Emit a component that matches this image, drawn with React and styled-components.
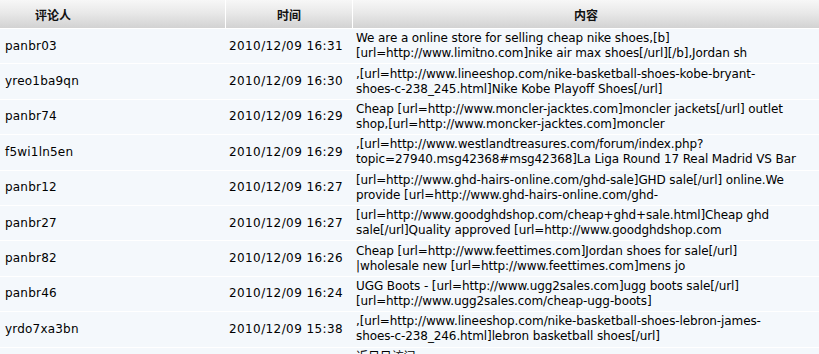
import React from 'react';
import styled, { createGlobalStyle } from 'styled-components';

const GlobalStyle = createGlobalStyle`
  html, body {
    margin: 0;
    padding: 0;
    background: #fff;
    overflow: hidden;
  }
  body {
    font-family: "DejaVu Sans", Tahoma, Verdana, "Noto Sans CJK SC", sans-serif;
    font-size: 12px;
    color: #000;
  }
`;

const comments = [
  {
    user: 'panbr03',
    time: '2010/12/09 16:31',
    lines: [
      'We are a online store for selling cheap nike shoes,[b]',
      '[url=http://www.limitno.com]nike air max shoes[/url][/b],Jordan sh',
    ],
  },
  {
    user: 'yreo1ba9qn',
    time: '2010/12/09 16:30',
    lines: [
      ',[url=http://www.lineeshop.com/nike-basketball-shoes-kobe-bryant-',
      'shoes-c-238_245.html]Nike Kobe Playoff Shoes[/url]',
    ],
  },
  {
    user: 'panbr74',
    time: '2010/12/09 16:29',
    lines: [
      'Cheap [url=http://www.moncler-jacktes.com]moncler jackets[/url] outlet',
      'shop,[url=http://www.moncker-jacktes.com]moncler',
    ],
  },
  {
    user: 'f5wi1ln5en',
    time: '2010/12/09 16:29',
    lines: [
      ',[url=http://www.westlandtreasures.com/forum/index.php?',
      'topic=27940.msg42368#msg42368]La Liga Round 17 Real Madrid VS Bar',
    ],
  },
  {
    user: 'panbr12',
    time: '2010/12/09 16:27',
    lines: [
      '[url=http://www.ghd-hairs-online.com/ghd-sale]GHD sale[/url] online.We',
      'provide [url=http://www.ghd-hairs-online.com/ghd-',
    ],
  },
  {
    user: 'panbr27',
    time: '2010/12/09 16:27',
    lines: [
      '[url=http://www.goodghdshop.com/cheap+ghd+sale.html]Cheap ghd',
      'sale[/url]Quality approved [url=http://www.goodghdshop.com',
    ],
  },
  {
    user: 'panbr82',
    time: '2010/12/09 16:26',
    lines: [
      'Cheap [url=http://www.feettimes.com]Jordan shoes for sale[/url]',
      '|wholesale new [url=http://www.feettimes.com]mens jo',
    ],
  },
  {
    user: 'panbr46',
    time: '2010/12/09 16:24',
    lines: [
      'UGG Boots -  [url=http://www.ugg2sales.com]ugg boots sale[/url]',
      '[url=http://www.ugg2sales.com/cheap-ugg-boots]',
    ],
  },
  {
    user: 'yrdo7xa3bn',
    time: '2010/12/09 15:38',
    lines: [
      ',[url=http://www.lineeshop.com/nike-basketball-shoes-lebron-james-',
      'shoes-c-238_246.html]lebron basketball shoes[/url]',
    ],
  },
  {
    user: '',
    time: '',
    lines: ['近日日访问', ''],
  },
];

const Table = styled.div`
  width: 819px;
  display: grid;
  grid-template-columns: 225px 127px 1fr;
`;

const HeadCell = styled.div`
  height: 28px;
  display: flex;
  align-items: center;
  justify-content: ${(p) => (p.$left ? 'flex-start' : 'center')};
  padding-left: ${(p) => (p.$left ? '35px' : '0')};
  background: linear-gradient(to bottom, #f7f7f7 0%, #e9e9e9 45%, #d2d2d2 100%);
  border-left: ${(p) => (p.$first ? 'none' : '1px solid #fff')};
  border-bottom: 1px solid #fff;
  font-family: "Noto Sans CJK SC", sans-serif;
  font-weight: 700;
  font-size: 12px;
  color: #111;
  white-space: nowrap;
`;

const Cell = styled.div`
  height: 34.4px;
  display: flex;
  flex-direction: column;
  justify-content: center;
  padding: 0 4px 0 ${(p) => p.$pad || '4px'};
  background: #f4f8fc;
  border-bottom: 1px solid #fff;
  white-space: nowrap;
  overflow: hidden;
  line-height: 15px;
  letter-spacing: ${(p) => p.$spacing || '0'};
`;

const Line = styled.span`
  display: block;
  height: 15px;
`;

export default function App() {
  return (
    <>
      <GlobalStyle />
      <Table>
        <HeadCell $first $left>评论人</HeadCell>
        <HeadCell>时间</HeadCell>
        <HeadCell>内容</HeadCell>
        {comments.map((c, i) => (
          <React.Fragment key={i}>
            <Cell $pad="5px" $spacing="0.2px">{c.user}</Cell>
            <Cell $spacing="0.4px">{c.time}</Cell>
            <Cell $spacing="-0.1px">
              {c.lines.map((l, j) => (
                <Line key={j}>{l}</Line>
              ))}
            </Cell>
          </React.Fragment>
        ))}
      </Table>
    </>
  );
}
